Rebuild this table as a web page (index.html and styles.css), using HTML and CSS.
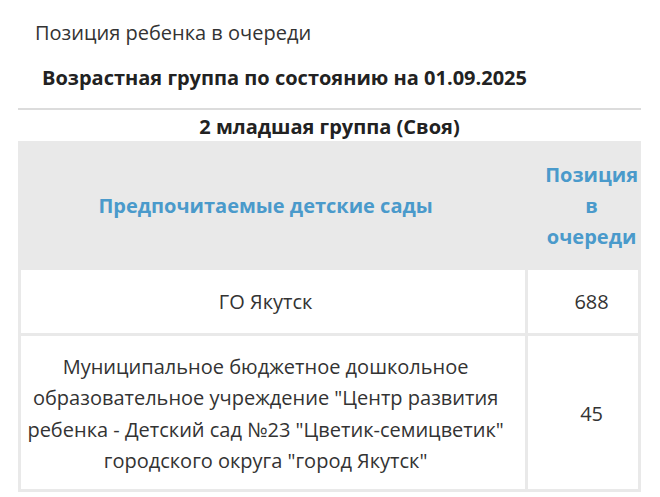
FILE: index.html
```html
<!DOCTYPE html>
<html lang="ru">
<head>
<meta charset="utf-8">
<link rel="stylesheet" href="styles.css">
</head>
<body>
<div class="page">
  <h1 class="page-title">Позиция ребенка в очереди</h1>
  <h2 class="age-title">Возрастная группа по состоянию на 01.09.2025</h2>
  <hr class="divider">
  <table class="queue">
    <caption class="queue-caption">2 младшая группа (Своя)</caption>
    <thead>
      <tr>
        <th class="col-name">Предпочитаемые детские сады</th>
        <th class="col-pos">Позиция в очереди</th>
      </tr>
    </thead>
    <tbody>
      <tr class="row-short">
        <td class="col-name">ГО Якутск</td>
        <td class="col-pos">688</td>
      </tr>
      <tr class="row-long">
        <td class="col-name">Муниципальное бюджетное дошкольное образовательное учреждение "Центр развития ребенка - Детский сад №23 "Цветик-семицветик" городского округа "город Якутск"</td>
        <td class="col-pos">45</td>
      </tr>
    </tbody>
  </table>
</div>
</body>
</html>
```
FILE: styles.css
```css
html, body {
  margin: 0;
  padding: 0;
  background: #ffffff;
}
body {
  font-family: "Open Sans", "Noto Sans", sans-serif;
  color: #333333;
}
.page {
  padding: 0 19px 0 18px;
}
.page-title {
  margin: 0;
  padding: 19px 0 0 17px;
  font-size: 20px;
  font-weight: 400;
  line-height: 28px;
  color: #333;
}
.age-title {
  margin: 0;
  padding: 17px 0 0 24px;
  font-size: 20px;
  font-weight: 700;
  line-height: 28px;
  color: #222;
}
.divider {
  margin: 16px 0 0 0;
  border: 0;
  border-top: 2px solid #dcdcdc;
  height: 0;
}
.queue {
  width: 100%;
  border-collapse: separate;
  border-spacing: 3px;
  background: #e9e9e9;
  font-size: 20px;
}
.queue-caption {
  background: #ffffff;
  font-weight: 700;
  font-size: 20px;
  line-height: 28px;
  padding: 3px 0 0;
  color: #222;
}
.queue th {
  background: #e9e9e9;
  color: #4a9acb;
  font-weight: 700;
  line-height: 31px;
  padding: 15px 0;
  text-align: center;
}
.queue td {
  background: #ffffff;
  text-align: center;
  line-height: 31.5px;
  color: #333;
}
.queue .col-name {
  padding-left: 0;
  padding-right: 15px;
}
.queue .col-pos {
  box-sizing: border-box;
  width: 109px;
  padding-left: 17px;
  padding-right: 0;
}
.queue .row-short td {
  padding-top: 16px;
  padding-bottom: 15px;
}
.queue .row-long td {
  padding-top: 15px;
  padding-bottom: 12px;
}
```
